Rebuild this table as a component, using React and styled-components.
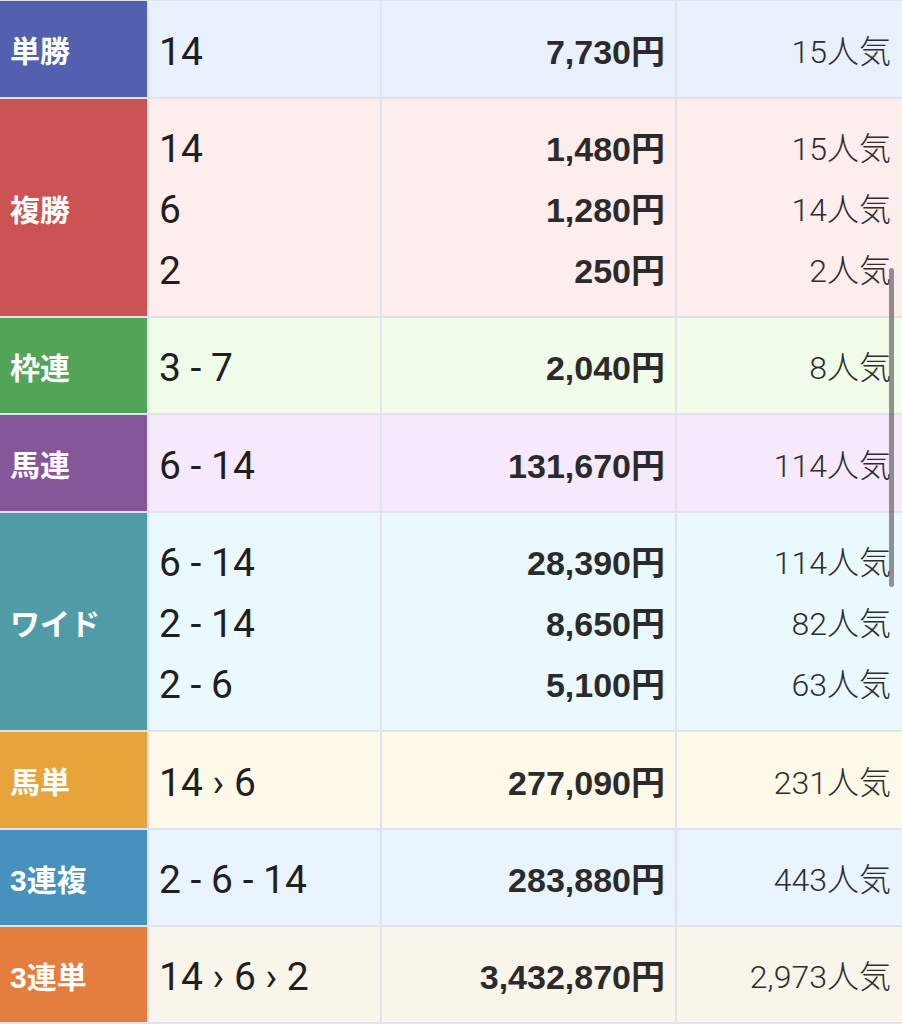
import React from 'react';
import styled, { createGlobalStyle } from 'styled-components';

const GlobalStyle = createGlobalStyle`
  html, body {
    margin: 0;
    padding: 0;
    background: #e2e2ea;
  }
  body {
    font-family: "Liberation Sans", "Noto Sans CJK JP", sans-serif;
    color: #222;
  }
`;

const Page = styled.div`
  position: relative;
  width: 902px;
  height: 1024px;
  overflow: hidden;
  background: #e2e2ea;
`;

const Table = styled.div`
  display: flex;
  flex-direction: column;
  gap: 2px;
  padding-top: 1px;
`;

const Row = styled.div`
  display: grid;
  grid-template-columns: 147px 231px 293px 1fr;
  gap: 2px;
  height: ${(p) => p.$h}px;
`;

const Label = styled.div`
  display: flex;
  align-items: center;
  padding-left: 10px;
  background: ${(p) => p.$color};
  color: #fff;
  font-size: 30px;
  font-weight: 700;
`;

const Cell = styled.div`
  display: flex;
  flex-direction: column;
  justify-content: center;
  padding: 20px ${(p) => p.$pr || 10}px 14px 10px;
  background: ${(p) => p.$bg};
  text-align: ${(p) => (p.$right ? 'right' : 'left')};
`;

const Combo = styled.div`
  line-height: 61px;
  font-family: Roboto, "Noto Sans CJK JP", sans-serif;
  font-size: 39px;
  font-weight: 400;
  color: #1f1f1f;
  white-space: pre;
`;

const Payout = styled.div`
  line-height: 61px;
  font-size: 34px;
  font-weight: 700;
  color: #2b2b2b;
`;

const Pop = styled.div`
  line-height: 61px;
  font-family: Roboto, "Noto Sans CJK JP", sans-serif;
  font-size: 32px;
  font-weight: 300;
  color: #2e2e2e;
`;

const Scrollbar = styled.div`
  position: absolute;
  left: 889px;
  top: 268px;
  width: 5px;
  height: 319px;
  border-radius: 3px;
  background: rgba(60, 60, 60, 0.55);
`;

const results = [
  { name: '単勝', color: '#5360af', bg: '#e9f0fe', h: 96, lines: [['14', '7,730円', '15人気']] },
  {
    name: '複勝',
    color: '#cc5353',
    bg: '#feeded',
    h: 217,
    lines: [
      ['14', '1,480円', '15人気'],
      ['6', '1,280円', '14人気'],
      ['2', '250円', '2人気'],
    ],
  },
  { name: '枠連', color: '#52a459', bg: '#f0fbea', h: 95, lines: [['3 - 7', '2,040円', '8人気']] },
  { name: '馬連', color: '#865798', bg: '#f6e9fc', h: 96, lines: [['6 - 14', '131,670円', '114人気']] },
  {
    name: 'ワイド',
    color: '#4f9ca7',
    bg: '#eaf9fe',
    h: 217,
    lines: [
      ['6 - 14', '28,390円', '114人気'],
      ['2 - 14', '8,650円', '82人気'],
      ['2 - 6', '5,100円', '63人気'],
    ],
  },
  { name: '馬単', color: '#e6a43a', bg: '#fef9e8', h: 96, lines: [['14 › 6', '277,090円', '231人気']] },
  { name: '3連複', color: '#4791bd', bg: '#e9f4fe', h: 95, lines: [['2 - 6 - 14', '283,880円', '443人気']] },
  { name: '3連単', color: '#e47e3f', bg: '#f9f5ea', h: 95, lines: [['14 › 6 › 2', '3,432,870円', '2,973人気']] },
];

const App = () => {
  return (
    <Page>
      <GlobalStyle />
      <Table>
        {results.map((r) => (
          <Row key={r.name} $h={r.h}>
            <Label $color={r.color}>{r.name}</Label>
            <Cell $bg={r.bg}>
              {r.lines.map((l, i) => (
                <Combo key={i}>{l[0]}</Combo>
              ))}
            </Cell>
            <Cell $bg={r.bg} $right $pr={10}>
              {r.lines.map((l, i) => (
                <Payout key={i}>{l[1]}</Payout>
              ))}
            </Cell>
            <Cell $bg={r.bg} $right $pr={11}>
              {r.lines.map((l, i) => (
                <Pop key={i}>{l[2]}</Pop>
              ))}
            </Cell>
          </Row>
        ))}
      </Table>
      <Scrollbar />
    </Page>
  );
};

export default App;
